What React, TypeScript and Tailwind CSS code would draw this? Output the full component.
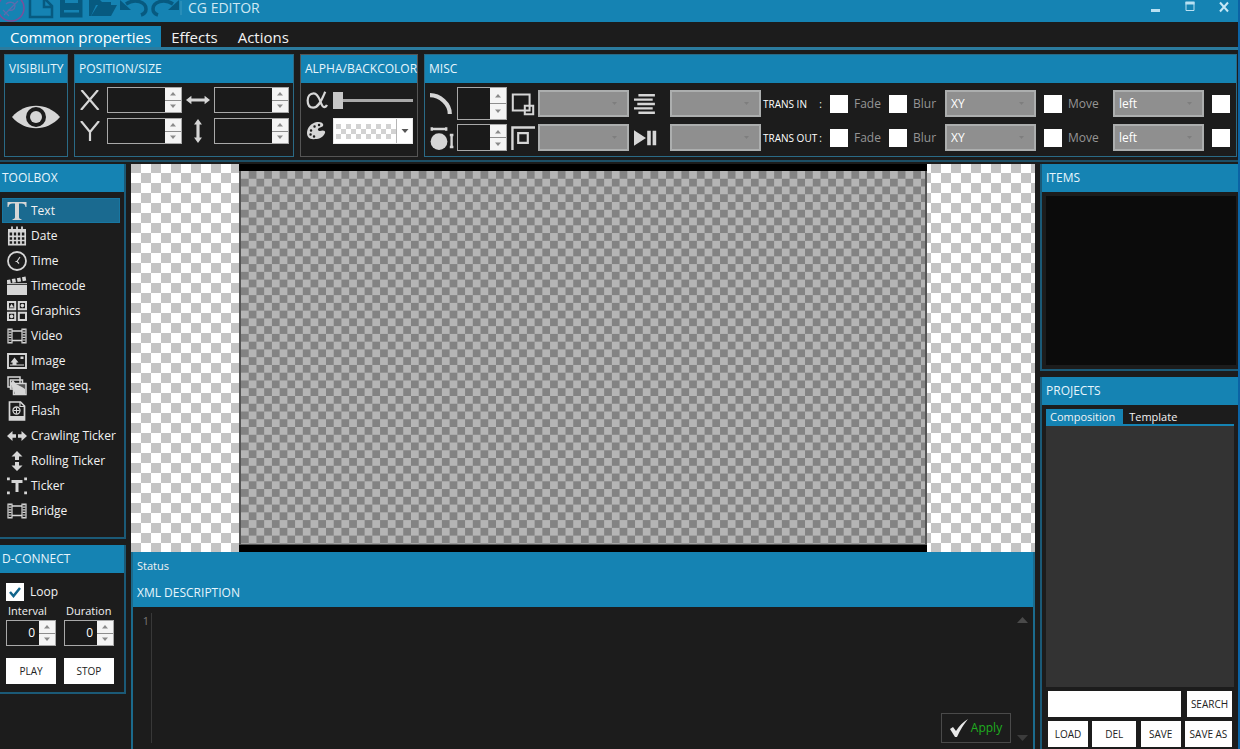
import { useState, type ReactNode } from "react";

const ink = "#d6d6d6";

function Icon({ size = 20, children, className = "" }: { size?: number; children: ReactNode; className?: string }) {
  return (
    <svg width={size} height={size} viewBox="0 0 20 20" fill="none" stroke={ink} className={"shrink-0 " + className} aria-hidden="true">
      {children}
    </svg>
  );
}

const film = (
  <>
    <path d="M1 3h4v14H1zM15 3h4v14h-4z" strokeWidth="1.200" />
    <path d="M3 3v14M17 3v14" strokeWidth="3" strokeDasharray="1.200 1.400" />
    <path d="M5 5h10M5 14.500h10" strokeWidth="1.700" />
  </>
);

const tools: { label: string; art: ReactNode }[] = [
  {
    label: "Text",
    art: <path d="M.5 1h19v5h-1c-.5-2.400-1.500-3.400-4-3.400h-2.500V16c0 1.500.7 2 2.500 2.200v.8h-9v-.8c1.800-.2 2.500-.7 2.500-2.200V2.600H5.500C3 2.600 2 3.600 1.500 6h-1z" fill={ink} stroke="none" />,
  },
  {
    label: "Date",
    art: (
      <>
        <path d="M1 3h18v3.500H1z" fill={ink} stroke="none" />
        <path d="M5 .5v4M10 .5v4M15 .5v4" strokeWidth="1.800" />
        <path d="M1.800 6v12.700h16.400V6M2 10.300h16M2 14.500h16M6 6v12.500M10 6v12.500M14 6v12.500" strokeWidth="1.700" />
      </>
    ),
  },
  {
    label: "Time",
    art: (
      <>
        <circle cx="10" cy="10" r="9" strokeWidth="1.800" />
        <path d="M13 6l-3 4.500 2 2M8.500 10.500h2" strokeWidth="1.100" />
      </>
    ),
  },
  {
    label: "Timecode",
    art: (
      <>
        <path d="M0 9h20v10H0z" fill={ink} stroke="none" />
        <path d="M0 6 19 2.500" strokeWidth="4" strokeDasharray="3.600 1.600" />
        <path d="M0 7.700h20" strokeWidth="1" />
      </>
    ),
  },
  {
    label: "Graphics",
    art: (
      <>
        <path d="M1 1h7.200v7.200H1zM11.800 1H19v7.200h-7.200zM1 11.800h7.200V19H1zM11.800 11.800H19V19h-7.200z" strokeWidth="2" />
        <path d="M4.600 2.800 7 6.500H2.300z" fill={ink} stroke="none" />
        <circle cx="15.400" cy="4.600" r="1.800" fill={ink} stroke="none" />
        <circle cx="4.600" cy="15.400" r="1.800" fill={ink} stroke="none" />
      </>
    ),
  },
  { label: "Video", art: film },
  {
    label: "Image",
    art: (
      <>
        <path d="M1 3h18v14H1z" strokeWidth="1.900" />
        <path d="M3 14.500v-1h2.500v-2H3.500L7.500 6.500l4 5H9.500v2H17v1z" fill={ink} stroke="none" />
        <path d="M13.500 5.500h3v2.500h-3z" fill={ink} stroke="none" />
      </>
    ),
  },
  {
    label: "Image seq.",
    art: (
      <>
        <path d="M1 1h12v10H1zM3.500 4h12v9h-12z" strokeWidth="1.500" />
        <path d="M6.500 7.500h12.500v11H6.500z" strokeWidth="1.500" fill="#555" />
        <path d="M3 8l3-4 3 4 6 3 3 2v5H8L6 12zM8 17v-4l3-3 3 3 4 2v2z" fill={ink} stroke="none" />
      </>
    ),
  },
  {
    label: "Flash",
    art: (
      <>
        <path d="M2.500 1h11l4 4v14h-15z" strokeWidth="1.700" />
        <path d="M13 1v4.500h4.500" strokeWidth="1.200" />
        <circle cx="9.500" cy="9.500" r="3.500" strokeWidth="1.300" />
        <path d="M9.500 6.500v6M6.500 9.500h6" strokeWidth="1" />
        <path d="M3 15h14v4H3z" fill={ink} stroke="none" />
      </>
    ),
  },
  {
    label: "Crawling Ticker",
    art: <path d="M0 10l5.500-5v3.300h3.500v3.400H5.500V15zM20 10l-5.500-5v3.300H11v3.400h3.500V15z" fill={ink} stroke="none" />,
  },
  {
    label: "Rolling Ticker",
    art: <path d="M10 0l5.500 5.500h-3.500v3.500H8V5.500H4.500zM10 20l5.500-5.500h-3.500V11H8v3.500H4.500z" fill={ink} stroke="none" />,
  },
  {
    label: "Ticker",
    art: (
      <>
        <path d="M4.500 4h11v3h-4v9h-3V7h-4z" fill={ink} stroke="none" />
        <path d="M0 1.500h2.800v2.800H0zM17.200 1.500H20v2.800h-2.800zM0 15.500h2.800v2.800H0zM17.200 15.500H20v2.800h-2.800z" fill={ink} stroke="none" />
      </>
    ),
  },
  { label: "Bridge", art: film },
];

function Header({ children }: { children: ReactNode }) {
  return <h2 className="flex h-7 shrink-0 items-center bg-[#1583b3] px-1 text-xs text-[#e6f5fc]">{children}</h2>;
}

function Spin({ label, value = "", className }: { label: string; value?: string; className: string }) {
  return (
    <div className={"flex border border-[#a9a9a9] bg-[#1a1a1a] " + className}>
      <input aria-label={label} defaultValue={value} className="min-w-0 flex-1 bg-transparent px-1 text-right text-xs text-white outline-none" />
      <div className="flex w-4 shrink-0 flex-col gap-px bg-[#8d8d8d]">
        <button aria-label={label + " up"} className="flex flex-1 items-center justify-center bg-[#f4f4f4]">
          <svg width="8" height="5" viewBox="0 0 8 5"><path d="M1 4.500 4 1l3 3.500z" fill="#8a8a8a" /></svg>
        </button>
        <button aria-label={label + " down"} className="flex flex-1 items-center justify-center bg-[#f4f4f4]">
          <svg width="8" height="5" viewBox="0 0 8 5"><path d="M1 .5 4 4 7 .5z" fill="#8a8a8a" /></svg>
        </button>
      </div>
    </div>
  );
}

function Drop({ label, value = "" }: { label: string; value?: string }) {
  return (
    <div className="relative h-[27px] w-[91px]">
      <select aria-label={label} className="h-full w-full appearance-none border-2 border-[#acaeae] bg-[#8f8f8f] px-1 text-xs text-white outline-none">
        <option>{value}</option>
      </select>
      <svg width="5" height="3" viewBox="0 0 5 3" className="pointer-events-none absolute top-3 right-3"><path d="M0 0h5L2.500 3z" fill="#7e7e7e" /></svg>
    </div>
  );
}

function Check({ label, bare = false }: { label: string; bare?: boolean }) {
  return (
    <label className="flex items-center gap-1.5 text-xs text-[#959595]">
      <input type="checkbox" aria-label={label} className="size-[18px] shrink-0 appearance-none bg-white checked:bg-[#1583b3]" />
      {bare ? null : <span>{label}</span>}
    </label>
  );
}

function TransRow({ name, art1, art2, art3, h }: { name: string; art1: ReactNode; art2: ReactNode; art3: ReactNode; h: string }) {
  return (
    <>
      {art1}
      <Spin label={name + " value"} className={"w-[50px] " + h} />
      {art2}
      <Drop label={name + " style"} />
      {art3}
      <Drop label={name + " mode"} />
      <span className="flex justify-between pr-2 text-[10px] whitespace-nowrap text-white">
        <span>{name}</span>
        <span>:</span>
      </span>
      <Check label="Fade" />
      <Check label="Blur" />
      <Drop label={name + " axis"} value="XY" />
      <Check label="Move" />
      <Drop label={name + " direction"} value="left" />
      <Check label={name + " last"} bare />
    </>
  );
}

function WhiteButton({ children, className = "" }: { children: ReactNode; className?: string }) {
  return <button className={"flex h-[26px] items-center justify-center bg-white text-[10px] whitespace-nowrap text-[#222] " + className}>{children}</button>;
}

function TitleIcons() {
  const c = "#075a80";
  return (
    <svg width="182" height="22" viewBox="0 0 182 22" fill="none" stroke={c} strokeWidth="2.500" aria-hidden="true">
      <circle cx="11" cy="8" r="13" stroke="#7a4f9b" strokeWidth="1.500" />
      <path d="M4 15 18 1M6 4c3-3 9-2 9 2s-4 5-7 4M3 10l6 6" stroke="#5b6cae" strokeWidth="1.300" />
      <path d="M30 0v17h22V6l-7-7M44-1v8h8" />
      <path d="M60-1h22.500v18.500H60z" fill={c} stroke="none" />
      <path d="M65 0h13v3H65zM64 10h15v2.500H64z" fill="#1583b3" stroke="none" />
      <path d="M89 0h11l2 2h9v3H96l-5 11h-2z" fill={c} stroke="none" />
      <path d="M98 5h19l-6 11H91z" fill={c} stroke="none" />
      <path d="M126 4c9-6 20-2 20 5 0 3-2 5-5 6" strokeWidth="3.500" />
      <path d="M120 0v10h11z" fill={c} stroke="none" />
      <path d="M173 4c-9-6-20-2-20 5 0 3 2 5 5 6" strokeWidth="3.500" />
      <path d="M179 0v10h-11z" fill={c} stroke="none" />
      <path d="M181 1v14" stroke="#3d99bf" strokeWidth="1" />
    </svg>
  );
}

export default function App() {
  const [tool, setTool] = useState("Text");
  const [tab, setTab] = useState("Common properties");
  const [loop, setLoop] = useState(true);

  return (
    <div className="flex min-h-screen flex-col border-r-2 border-[#0b63a5] bg-[#1c1c1c] font-['Open_Sans','Noto_Sans',sans-serif] leading-none text-[#f2f2f2]">
      <header className="flex h-[22px] justify-between overflow-hidden bg-[#1583b3]">
        <div className="flex gap-1.5">
          <TitleIcons />
          <h1 className="pt-px text-sm leading-none text-[#cfe8f3]">CG EDITOR</h1>
        </div>
        <div className="flex items-start gap-[22px] pt-px pr-2">
          <button aria-label="Minimize"><svg width="12" height="12" viewBox="0 0 12 12"><path d="M1 9.500h9" stroke="#b9e0f2" strokeWidth="3" /></svg></button>
          <button aria-label="Maximize"><svg width="12" height="12" viewBox="0 0 12 12" fill="none"><path d="M2 1v8.500h8V1" stroke="#b9e0f2" strokeWidth="1" /><path d="M1.500 2h9" stroke="#b9e0f2" strokeWidth="3" /></svg></button>
          <button aria-label="Close"><svg width="12" height="12" viewBox="0 0 12 12"><path d="M2 1.500l8 9M10 1.500l-8 9" stroke="#c6e7f6" strokeWidth="2" /></svg></button>
        </div>
      </header>

      <nav className="mt-1 flex border-b-[3px] border-[#2b7b9e]">
        {["Common properties", "Effects", "Actions"].map((t) => (
          <button key={t} onClick={() => setTab(t)} className={"flex h-[21px] items-center px-2.5 pt-0.5 text-[15px] " + (t === tab ? "bg-[#1583b3] text-white" : "")}>
            {t}
          </button>
        ))}
      </nav>

      <div className="mt-1 flex gap-1.5 border-b-2 border-[#1d4f66] pr-px pb-[3px] pl-1">
        <section className="flex w-16 shrink-0 flex-col border border-[#2a6a86]">
          <Header>VISIBILITY</Header>
          <button aria-label="Toggle visibility" className="flex flex-1 items-center justify-center pb-1.5">
            <svg width="48" height="28" viewBox="0 0 48 28">
              <path d="M0 14C13-1 35-1 48 14 35 29 13 29 0 14z" fill={ink} />
              <circle cx="24" cy="14" r="10" fill="#1c1c1c" />
              <circle cx="24" cy="14" r="6" fill={ink} />
            </svg>
          </button>
        </section>

        <section className="flex w-[220px] shrink-0 flex-col border border-[#2a6a86]">
          <Header>POSITION/SIZE</Header>
          <div className="grid grid-cols-[27px_75px_32px_75px] items-center gap-y-[5px] pt-1 pb-3 pl-[5px]">
            <Icon size={20}><path d="M1.500 0 18.500 20M18 0 1 20" strokeWidth="2.200" /></Icon>
            <Spin label="X" className="h-[26px]" />
            <Icon size={24} className="mx-auto"><path d="M0 10l4.500-3.500v2.300h11V6.500L20 10l-4.500 3.500v-2.300h-11v2.300z" fill={ink} stroke="none" /></Icon>
            <Spin label="Width" className="h-[26px]" />
            <Icon size={20}><path d="M1 0l9 11L19 0M10 10.500V20" strokeWidth="2.200" /></Icon>
            <Spin label="Y" className="h-[26px]" />
            <Icon size={24} className="mx-auto"><path d="M10 0l3.300 4.500h-2v11h2L10 20l-3.300-4.500h2v-11h-2z" fill={ink} stroke="none" /></Icon>
            <Spin label="Height" className="h-[26px]" />
          </div>
        </section>

        <section className="flex w-[118px] shrink-0 flex-col border border-[#555]">
          <Header>ALPHA/BACKCOLOR</Header>
          <div className="grid grid-cols-[27px_80px] items-center gap-y-[5px] pt-1 pl-[5px]">
            <Icon size={22}><path d="M17.500 2.500C15 8 12 17 6.500 17 3 17 1.500 14 1.500 10.500S3.500 4 7 4c6 0 6 12.500 9.500 12.500 1.300 0 2-.6 2.500-2" strokeWidth="2" /></Icon>
            <input
              type="range"
              aria-label="Alpha"
              defaultValue={0}
              className="h-[26px] w-full appearance-none bg-transparent [&::-webkit-slider-runnable-track]:h-[3px] [&::-webkit-slider-runnable-track]:bg-[#a8a8a8] [&::-webkit-slider-thumb]:-mt-[7px] [&::-webkit-slider-thumb]:h-[17px] [&::-webkit-slider-thumb]:w-[10px] [&::-webkit-slider-thumb]:appearance-none [&::-webkit-slider-thumb]:bg-[#c6c6c6]"
            />
            <Icon size={20}>
              <path d="M11 1C5 2 1 7 1 12c0 4 3 7 8 6 5 0 8-2 10-6 1-3-3-3-5-2-2 0-3-2-1-3 3-1 5-2 4-4-1-2-4-2-6-2z" fill={ink} stroke="none" />
              <path d="M5 9.500h.1M8.500 5.500h.1M4.500 13.500h.1M8 15.500h.1M13 4h.1" stroke="#1c1c1c" strokeWidth="2.400" strokeLinecap="round" />
            </Icon>
            <button aria-label="Back colour" className="flex h-[26px] items-center border border-[#e8e8e8] bg-white">
              <span className="ml-0.5 h-[15px] flex-1 bg-[conic-gradient(#fff_25%,#d2d2d2_0_50%,#fff_0_75%,#d2d2d2_0)] bg-size-[10px_10px]" />
              <span className="flex h-full w-4 items-center justify-center border-l border-[#b5b5b5]">
                <svg width="8" height="6" viewBox="0 0 8 6"><path d="M.5 1h7L4 5z" fill="#555" /></svg>
              </span>
            </button>
          </div>
        </section>

        <section className="flex min-w-0 flex-1 flex-col border border-[#2a6a86]">
          <Header>MISC</Header>
          <div className="grid grid-cols-[27px_54px_27px_96px_36px_93px_67px_59px_56px_99px_69px_99px_18px] items-center gap-y-1 overflow-hidden pt-1 pl-[5px]">
            <TransRow
              name="TRANS IN"
              h="h-[33px]"
              art1={<Icon size={22}><path d="M0 2c9 0 18 8 18 17" strokeWidth="3.800" /></Icon>}
              art2={<Icon size={24}><path d="M1.500 2h14v13.500h-14zM11.500 11.500h7v7h-7z" strokeWidth="1.700" /></Icon>}
              art3={<Icon size={22}><path d="M4 2h15M0 6h17M3 10h16M0 14h17M4 18h15" strokeWidth="2.200" /></Icon>}
            />
            <TransRow
              name="TRANS OUT"
              h="h-[27px]"
              art1={
                <Icon size={24}>
                  <circle cx="7.500" cy="13" r="7" fill={ink} stroke="none" />
                  <path d="M1 2.500h13M1.500 1v3M13.500 1v3M18 7v11M16.500 7.500h3M16.500 17.500h3" strokeWidth="2" />
                </Icon>
              }
              art2={<Icon size={24}><path d="M1.200 20V1.200H20" strokeWidth="2" /><path d="M6 6h8v8H6z" strokeWidth="1.800" /></Icon>}
              art3={<Icon size={24}><path d="M0 3.500 10 10 0 16.500z" fill={ink} stroke="none" /><path d="M12.500 4v12M17 4v12" strokeWidth="3" /></Icon>}
            />
          </div>
        </section>
      </div>

      <main className="mt-0.5 flex flex-1 gap-[5px]">
        <aside className="flex w-[126px] shrink-0 flex-col gap-1.5">
          <section className="flex flex-col border-r-2 border-b-2 border-[#1b5a77]">
            <Header><span className="-ml-0.5">TOOLBOX</span></Header>
            <ul className="pt-1.5 pr-1 pb-3.5 pl-0.5">
              {tools.map((t) => (
                <li key={t.label}>
                  <button
                    onClick={() => setTool(t.label)}
                    className={"flex h-[25px] w-full items-center gap-1 border pl-1 text-xs whitespace-nowrap " + (t.label === tool ? "border-[#1777a2] bg-[#1a6a90]" : "border-transparent")}
                  >
                    <Icon>{t.art}</Icon>
                    {t.label}
                  </button>
                </li>
              ))}
            </ul>
          </section>

          <section className="flex flex-col border-r-2 border-b-2 border-[#1b5a77]">
            <Header><span className="-ml-0.5">D-CONNECT</span></Header>
            <div className="flex flex-col px-1.5 pt-2.5 pb-2">
              <label className="flex items-center gap-1.5 text-xs">
                <span className="relative flex size-[18px]">
                  <input type="checkbox" checked={loop} onChange={(e) => setLoop(e.target.checked)} className="size-[18px] appearance-none bg-white" />
                  {loop && <svg viewBox="0 0 18 18" className="pointer-events-none absolute inset-0"><path d="M4 9l3.500 4L14 5" fill="none" stroke="#12658c" strokeWidth="2.500" /></svg>}
                </span>
                Loop
              </label>
              <div className="mt-1 flex gap-2 text-[11px]">
                <div className="flex w-[50px] flex-col gap-1"><span className="pl-0.5">Interval</span><Spin label="Interval" value="0" className="h-[26px]" /></div>
                <div className="flex w-[50px] flex-col gap-1"><span className="pl-0.5">Duration</span><Spin label="Duration" value="0" className="h-[26px]" /></div>
              </div>
              <div className="mt-3 flex gap-2">
                <WhiteButton className="w-[50px]">PLAY</WhiteButton>
                <WhiteButton className="w-[50px]">STOP</WhiteButton>
              </div>
            </div>
          </section>
        </aside>

        <div className="flex min-w-0 flex-1 flex-col">
          <div className="flex h-[388px] justify-center bg-[conic-gradient(#fff_25%,#c4c4c4_0_50%,#fff_0_75%,#c4c4c4_0)] bg-size-[20px_20px] bg-position-[0px_-1px]">
            <div className="flex w-[76%] border-y-[7px] border-black bg-[#555] px-0.5">
              <div className="flex-1 border-b border-[#555] bg-[conic-gradient(#838383_25%,#b5b5b5_0_50%,#838383_0_75%,#b5b5b5_0)] bg-size-[2.26%_4.16%]" />
            </div>
          </div>
          <section className="flex flex-1 flex-col border-x-2 border-[#1b6a8c]">
            <div className="flex h-[27px] items-center bg-[#1583b3] px-1 text-[11px]">Status</div>
            <Header>XML DESCRIPTION</Header>
            <div className="flex flex-1 py-1.5">
              <span className="w-[19px] border-r border-[#383838] pt-0.5 pr-0.5 text-right text-[11px] text-[#777]">1</span>
              <textarea aria-label="XML description" className="min-w-0 flex-1 resize-none bg-transparent outline-none" />
              <button className="flex h-[30px] w-[70px] items-center justify-center gap-0.5 self-end border border-[#4a4a4a] text-xs text-[#1fae1f]">
                <svg width="19" height="19" viewBox="0 0 19 19"><path d="M0 10l3-2 3 4C9 7 13 3 18 0c-4 5-8 11-11 18H5z" fill="#e8e8e8" /></svg>
                Apply
              </button>
              <div className="flex w-[22px] flex-col items-center justify-between pt-1 pb-0.5">
                <svg width="11" height="6" viewBox="0 0 11 6"><path d="M0 6 5.500 0 11 6z" fill="#4a4a4a" /></svg>
                <svg width="11" height="6" viewBox="0 0 11 6"><path d="M0 0h11L5.500 6z" fill="#3c3c3c" /></svg>
              </div>
            </div>
          </section>
        </div>

        <aside className="flex w-[198px] shrink-0 flex-col gap-1.5">
          <section className="flex flex-col border-b-2 border-l-2 border-[#1b5a77]">
            <Header>ITEMS</Header>
            <div className="mt-1 mr-0.5 mb-1 ml-1 h-[169px] bg-[#0b0b0b]" />
          </section>
          <section className="flex flex-1 flex-col border-l-2 border-[#1b5a77]">
            <Header>PROJECTS</Header>
            <div className="flex flex-1 flex-col pt-1 pr-1 pb-0.5 pl-1">
              <div className="flex border-b-2 border-[#1583b3] text-[11px]">
                <button className="h-[15px] bg-[#1583b3] pr-2 pl-1">Composition</button>
                <button className="h-[15px] px-1.5">Template</button>
              </div>
              <div className="flex-1 bg-[#333]" />
              <div className="mt-1 flex gap-1.5 px-0.5">
                <input aria-label="Search projects" className="h-[26px] min-w-0 flex-1 bg-white px-1 text-xs text-black outline-none" />
                <WhiteButton className="w-[45px]">SEARCH</WhiteButton>
              </div>
              <div className="mt-1 flex justify-between gap-1 px-0.5">
                <WhiteButton className="w-10">LOAD</WhiteButton>
                <WhiteButton className="w-11">DEL</WhiteButton>
                <WhiteButton className="w-10">SAVE</WhiteButton>
                <WhiteButton className="w-[47px]">SAVE AS</WhiteButton>
              </div>
            </div>
          </section>
        </aside>
      </main>
    </div>
  );
}
